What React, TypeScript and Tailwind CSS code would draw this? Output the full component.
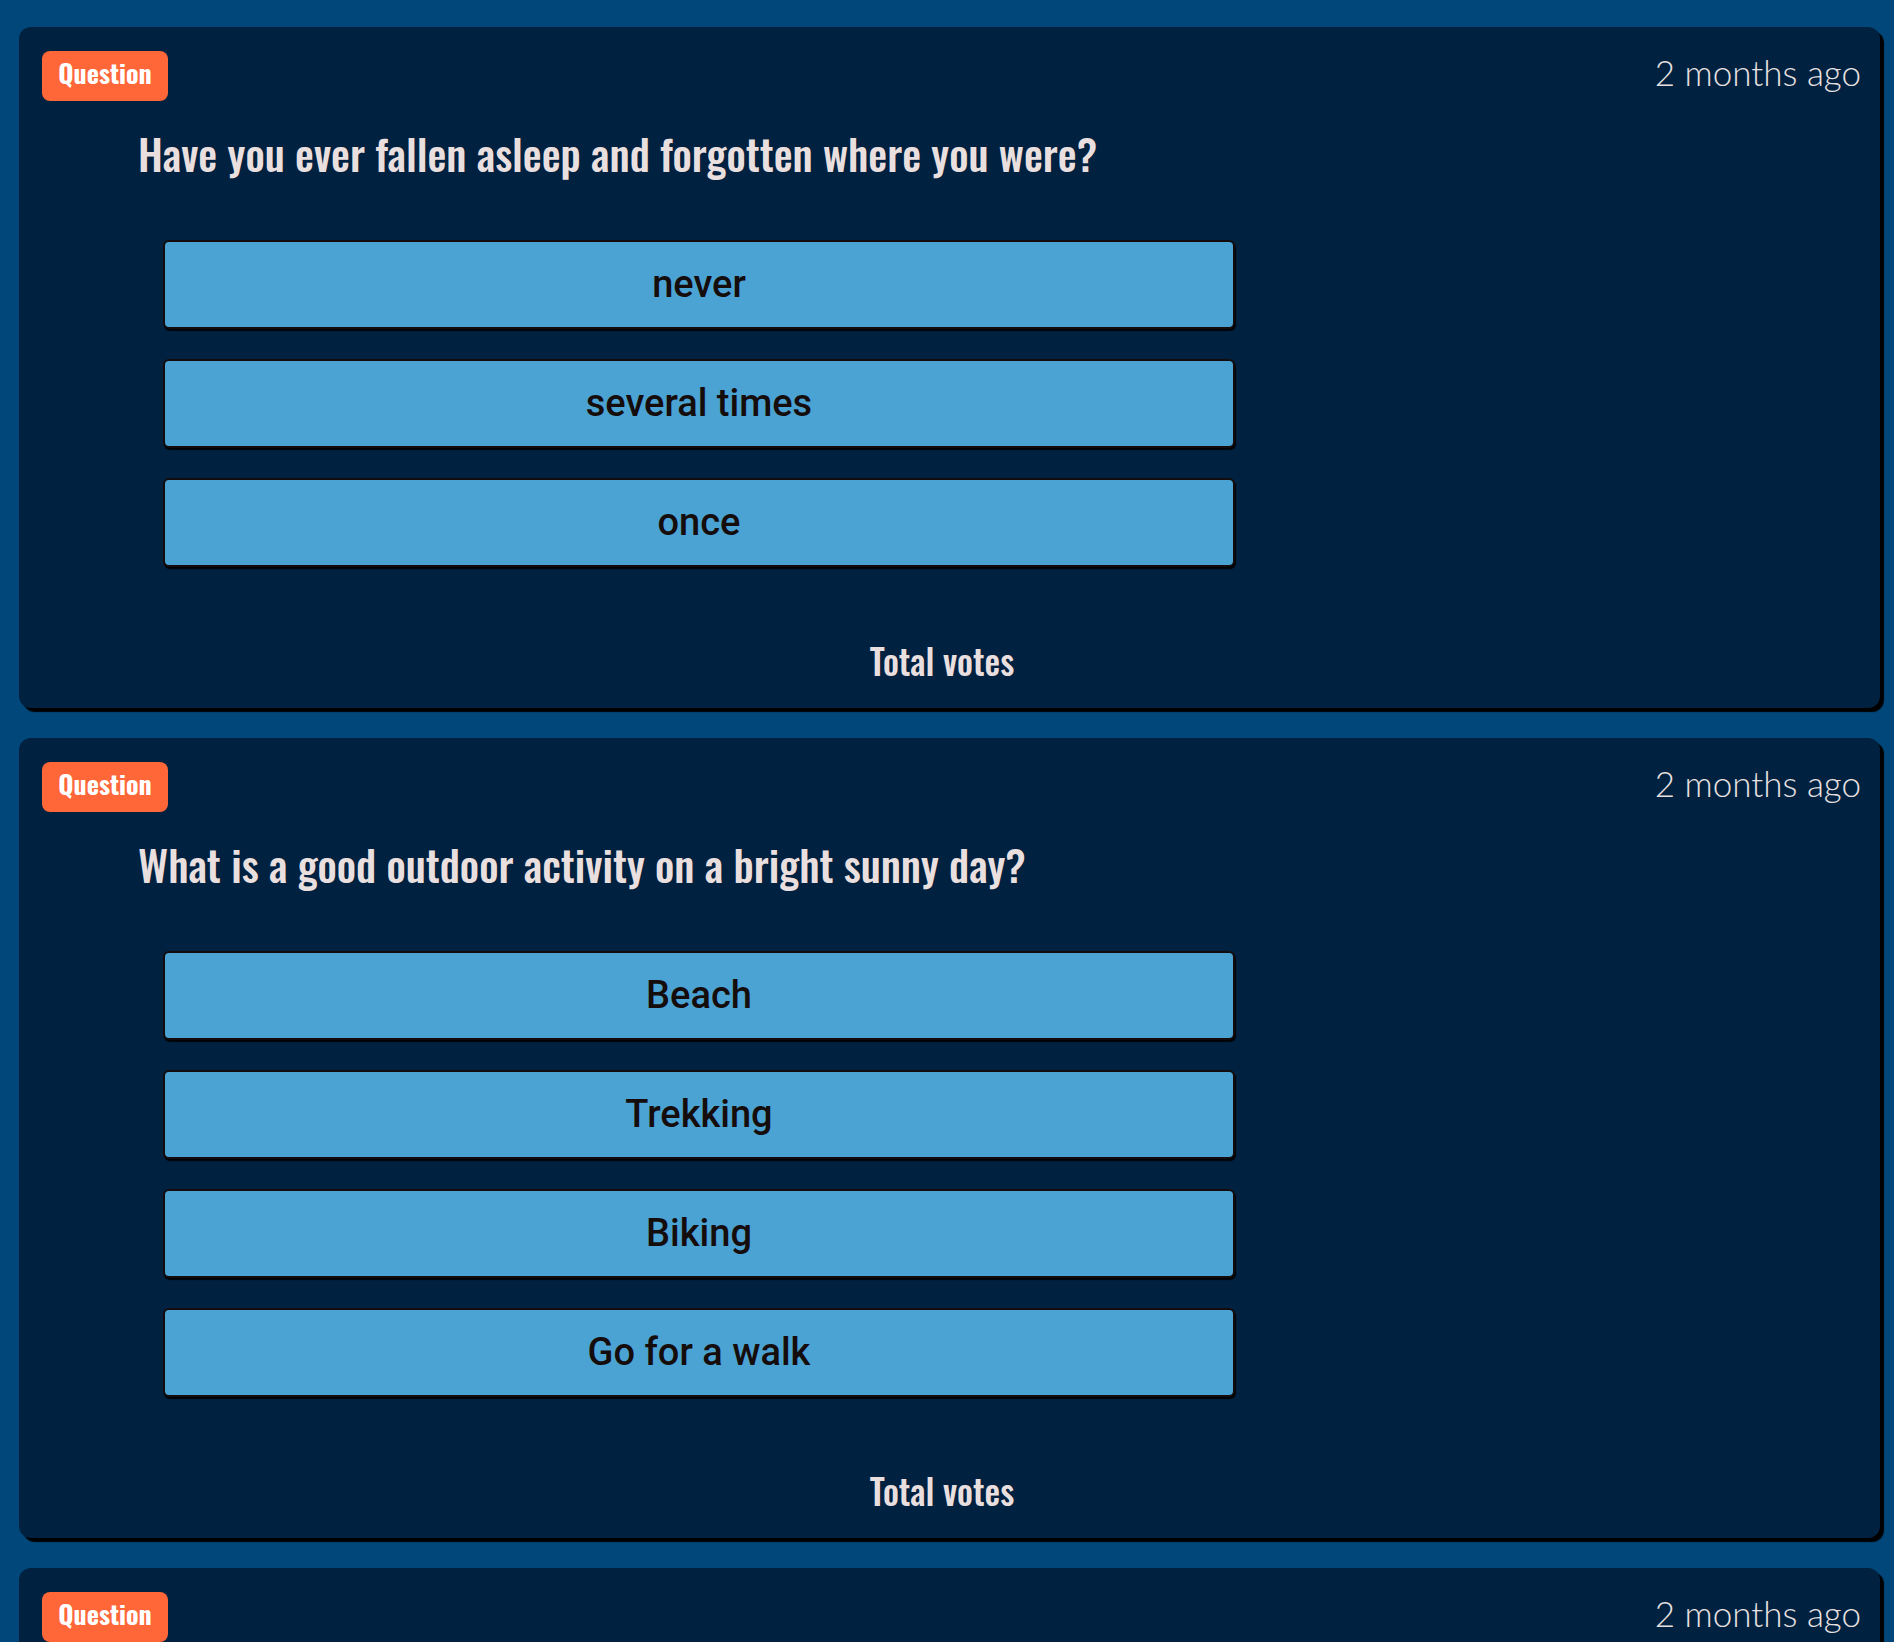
import React from 'react'

type Question = {
  id: number
  text: string
  options: string[]
  when: string
}

const questions: Question[] = [
  {
    id: 1,
    text: 'Have you ever fallen asleep and forgotten where you were?',
    options: ['never', 'several times', 'once'],
    when: '2 months ago',
  },
  {
    id: 2,
    text: 'What is a good outdoor activity on a bright sunny day?',
    options: ['Beach', 'Trekking', 'Biking', 'Go for a walk'],
    when: '2 months ago',
  },
  {
    id: 3,
    text: 'Which season do you like the most?',
    options: ['Summer', 'Winter', 'Spring'],
    when: '2 months ago',
  },
]

const condensed = {
  fontFamily:
    '"Oswald", "Liberation Sans Narrow", "DejaVu Sans Condensed", "Liberation Sans", sans-serif',
}

function QuestionCard({ q }: { q: Question }) {
  return (
    <div className="ml-[19px] mr-[14px] rounded-xl bg-[#00213f] pl-[23px] pr-[19px] pt-[24px] pb-[28px] shadow-[4px_4px_1px_#000]">
      {/* HEADER */}
      <div className="flex h-[50px] items-center justify-between">
        <span
          style={condensed}
          className="flex h-[50px] w-[126px] items-center justify-center rounded-lg bg-[#ff6638] pb-[7px] text-[26px] font-bold leading-none text-white"
        >
          Question
        </span>

        <span className="pb-[7px] font-['Lato',sans-serif] text-[35px] font-light text-[#e9e1e1]">
          {q.when}
        </span>
      </div>

      <h2
        style={condensed}
        className="mt-[27px] pl-[96px] text-[42.4px] font-medium leading-[49px] text-[#e9dfdf]"
      >
        {q.text}
      </h2>

      {/* OPTIONS */}
      <div className="mt-[63px] flex flex-col gap-[30px] pl-[121px]">
        {q.options.map((opt) => (
          <button
            key={opt}
            className="flex h-[89px] w-[1072px] items-center justify-center rounded-md border-2 border-[#140c0c] bg-[#4ba3d4] font-['Roboto',sans-serif] text-[38px] font-medium text-[#150c0c] shadow-[1px_2px_1px_rgba(0,0,0,0.9)]"
          >
            {opt}
          </button>
        ))}
      </div>

      <p
        style={condensed}
        className="mt-[73px] pr-[19px] text-center text-[35px] font-medium leading-[40px] text-[#e9dfdf]"
      >
        Total votes
      </p>
    </div>
  )
}

export default function App() {
  return (
    <div className="min-h-screen bg-[#01477a] pt-[27px] pb-10">
      <div className="flex flex-col gap-[30px]">
        {questions.map((q) => (
          <QuestionCard key={q.id} q={q} />
        ))}
      </div>
    </div>
  )
}
